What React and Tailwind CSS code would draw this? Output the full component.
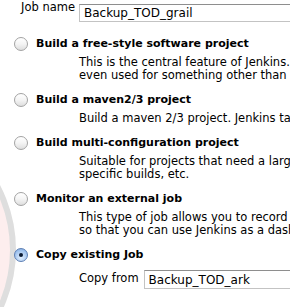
import React from "react";

const options = [
  {
    title: "Build a free-style software project",
    desc: [
      "This is the central feature of Jenkins. Jenkins will build your project,",
      "even used for something other than software build.",
    ],
  },
  {
    title: "Build a maven2/3 project",
    desc: ["Build a maven 2/3 project. Jenkins takes advantage of your POM files"],
  },
  {
    title: "Build multi-configuration project",
    desc: [
      "Suitable for projects that need a large number of different configurations,",
      "specific builds, etc.",
    ],
  },
  {
    title: "Monitor an external job",
    desc: [
      "This type of job allows you to record the execution of a process run outside Jenkins,",
      "so that you can use Jenkins as a dashboard of your existing automation system.",
    ],
  },
];

const Radio = ({ checked }) =>
  checked ? (
    <span className="flex h-[14px] w-[14px] shrink-0 items-center justify-center rounded-full border border-[#5d7fb5] bg-[radial-gradient(circle_at_50%_70%,#e3f0ff,#9cc0ec_70%,#6f9bd8)]">
      <span className="h-[4px] w-[4px] rounded-full bg-[#0b1a33]" />
    </span>
  ) : (
    <span className="h-[14px] w-[14px] shrink-0 rounded-full border border-[#a3a3a3] bg-[linear-gradient(to_bottom,#ffffff,#f4f4f4_50%,#dedede)]" />
  );

const Field = ({ value, className }) => (
  <div
    className={`w-[300px] shrink-0 border border-[#c3c3c3] border-t-[#8e8e8e] bg-white pl-[4px] text-[12px] leading-[16px] ${className}`}
  >
    {value}
  </div>
);

export default function App() {
  return (
    <div className="relative h-[307px] w-[290px] overflow-hidden whitespace-nowrap bg-white font-['DejaVu_Sans',Verdana,sans-serif] text-[11.5px] text-black">
      {/* faint logo watermark in the corner */}
      <svg className="absolute left-0 top-0" width="290" height="307">
        <circle cx="-124" cy="250" r="137" fill="#fdeeee" stroke="#dedede" strokeWidth="6" />
      </svg>

      <div className="relative flex flex-col">
        <div className="flex items-start pl-[21px] pt-[1px]">
          <span className="leading-[13px]">Job name</span>
          <Field value="Backup_TOD_grail" className="ml-[4px] mt-[3px] h-[18px]" />
        </div>

        <div className="mt-[15px] flex flex-col">
          {options.map((o) => (
            <div key={o.title} className="mb-[11px] flex flex-col">
              <div className="flex h-[14px] items-center pl-[14px]">
                <Radio />
                <span className="ml-[8px] text-[11px] font-bold">{o.title}</span>
              </div>
              <div className="mt-[5px] flex flex-col pl-[79px] leading-[13px]">
                {o.desc.map((d) => (
                  <span key={d}>{d}</span>
                ))}
              </div>
            </div>
          ))}

          <div className="flex h-[14px] items-center pl-[14px]">
            <Radio checked />
            <span className="ml-[8px] text-[11px] font-bold">Copy existing Job</span>
          </div>
          <div className="mt-[8px] flex items-start pl-[79px]">
            <span className="pt-[2px] leading-[13px]">Copy from</span>
            <Field value="Backup_TOD_ark" className="ml-[5px] h-[19px] pt-[1px]" />
          </div>
        </div>
      </div>
    </div>
  );
}
